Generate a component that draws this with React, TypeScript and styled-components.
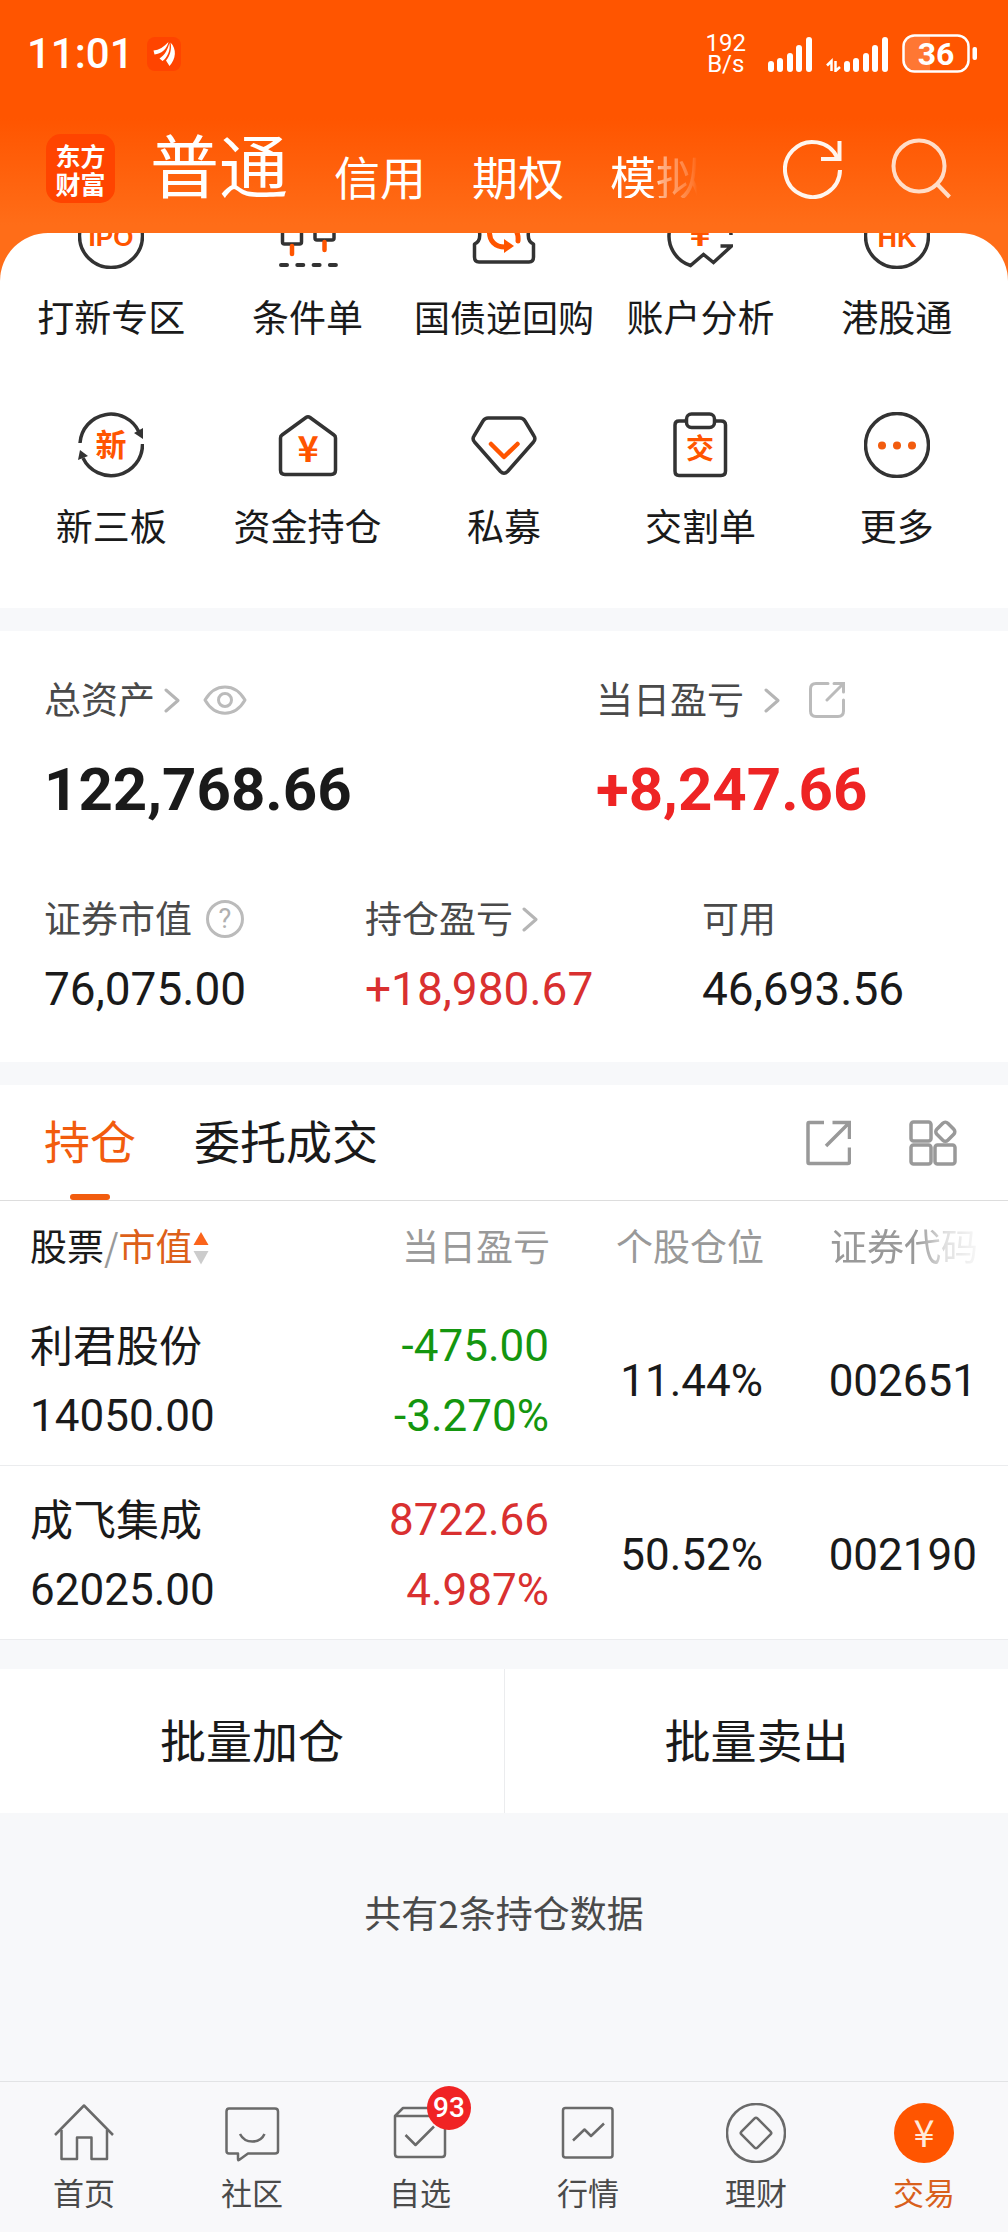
import React from 'react';
import styled, { createGlobalStyle } from 'styled-components';

const CJK = '"Noto Sans CJK SC", "Noto Sans", sans-serif';
const NUM = 'Roboto, "Noto Sans CJK SC", sans-serif';

const color = {
  brand: '#ff5500',
  accent: '#f25c0e',
  ink: '#1a1a1a',
  label: '#4a4a4a',
  muted: '#999999',
  faint: '#bbbbbb',
  up: '#d93030',
  upStrong: '#ee2424',
  down: '#14960f',
  band: '#f7f8fa',
  stroke: '#333333',
};

const GlobalStyle = createGlobalStyle`
  * { box-sizing: border-box; }
  body { margin: 0; background: ${color.band}; font-family: ${CJK}; color: ${color.ink}; }
  button { margin: 0; padding: 0; border: 0; background: none; font: inherit; color: inherit; cursor: pointer; }
  a { color: inherit; text-decoration: none; }
  svg { display: block; flex: none; }
`;

const Page = styled.div`
  display: flex;
  flex-direction: column;
  min-height: 100vh;
`;

/* ---------- header ---------- */

const Hero = styled.div`
  background: linear-gradient(180deg, #ff5500 0, #ff5500 118px, #ff6d18 225px, #ff6d18 100%);
`;

const StatusBar = styled.div`
  display: flex;
  align-items: center;
  height: 108px;
  padding: 0 31px 0 27px;
  color: #fff;
  font-family: ${NUM};
`;

const Clock = styled.time`
  font-size: 42px;
  font-weight: 500;
  line-height: 50px;
  margin-right: 13px;
`;

const NotifyIcon = styled.span`
  width: 34px;
  height: 34px;
  border-radius: 8px;
  background: #ff4400;
`;

const StatusRight = styled.div`
  display: flex;
  align-items: center;
  gap: 14px;
  margin-left: auto;
`;

const NetSpeed = styled.div`
  margin-right: 8px;
  font-size: 24px;
  line-height: 21px;
  text-align: center;
`;

const AccountBar = styled.header`
  display: flex;
  align-items: flex-end;
  padding: 21px 57px 30px 46px;
`;

const BrandLogo = styled.a`
  display: flex;
  align-items: center;
  justify-content: center;
  width: 69px;
  height: 69px;
  margin-right: 35px;
  border-radius: 15px;
  background: #ff4400;
  color: #fff;
  font-size: 25px;
  font-weight: 700;
  line-height: 28px;
`;

const AccountTabs = styled.nav`
  display: flex;
  align-items: flex-end;
  gap: 46px;
  padding-bottom: 5px;
`;

const AccountTab = styled.button<{ $active?: boolean; $faded?: boolean }>`
  color: #fff;
  white-space: nowrap;
  font-size: ${(p) => (p.$active ? 69 : 46)}px;
  line-height: 1;
  ${(p) =>
    p.$faded &&
    'mask-image: linear-gradient(90deg, #000 46%, rgba(0,0,0,.5) 56%, rgba(0,0,0,.15) 90%, transparent 95%);'}
`;

const HeaderActions = styled.div`
  display: flex;
  gap: 48px;
  margin-left: auto;
  padding-bottom: 4px;
`;

/* ---------- shortcuts ---------- */

const Sheet = styled.section`
  overflow: hidden;
  border-radius: 48px 48px 0 0;
  background: #fff;
`;

const ShortcutGrid = styled.div`
  display: grid;
  grid-template-columns: repeat(5, 1fr);
  row-gap: 71px;
  margin-top: -30px;
  padding: 0 13px 58px;
`;

const Shortcut = styled.button<{ $compact?: boolean }>`
  display: flex;
  flex-direction: column;
  align-items: center;
  gap: 22px;
  font-size: ${(p) => (p.$compact ? 36 : 37)}px;
  line-height: 50px;
  white-space: nowrap;
`;

const IconText = styled.text`
  fill: ${color.brand};
  font-weight: 700;
  text-anchor: middle;
`;

/* ---------- assets ---------- */

const Assets = styled.section`
  margin-top: 23px;
  padding: 42px 44px 48px;
  background: #fff;
`;

const Totals = styled.div`
  display: grid;
  grid-template-columns: 3fr 2fr;
  margin-bottom: 67px;
`;

const Details = styled.div`
  display: grid;
  grid-template-columns: 321fr 337fr 262fr;
`;

const Caption = styled.div`
  display: flex;
  align-items: center;
  color: ${color.label};
  font-size: 37px;
  line-height: 50px;
  white-space: nowrap;

  & svg { margin-top: 4px; }
`;

const CaptionButton = styled.button<{ $gap: number }>`
  display: flex;
  align-items: center;
  gap: ${(p) => p.$gap}px;
`;

const IconButton = styled.button<{ $gap?: number }>`
  margin-left: ${(p) => p.$gap ?? 0}px;
`;

const BigValue = styled.div<{ $up?: boolean }>`
  margin-top: 32px;
  font: 700 60px/70px ${NUM};
  color: ${(p) => (p.$up ? color.upStrong : color.ink)};
`;

const Value = styled.div<{ $up?: boolean }>`
  margin-top: 22px;
  font: 400 46px/50px ${NUM};
  color: ${(p) => (p.$up ? color.up : color.ink)};
`;

/* ---------- positions ---------- */

const Positions = styled.section`
  margin-top: 23px;
  background: #fff;
`;

const TabRow = styled.div`
  display: flex;
  align-items: center;
  gap: 58px;
  padding: 0 51px 0 44px;
  border-bottom: 1px solid #dddddd;
`;

const Tab = styled.button<{ $active?: boolean }>`
  display: flex;
  flex-direction: column;
  align-items: center;
  font-size: 46px;
  line-height: 109px;
  color: ${(p) => (p.$active ? color.accent : color.ink)};

  &::after {
    content: '';
    width: 40px;
    height: 6px;
    border-radius: 3px;
    background: ${(p) => (p.$active ? color.accent : 'transparent')};
  }
`;

const TabActions = styled.div`
  display: flex;
  align-items: center;
  gap: 58px;
  margin-left: auto;
`;

const Table = styled.table`
  width: 100%;
  table-layout: fixed;
  border-collapse: separate;
  border-spacing: 0;
  text-align: right;
`;

const HeadCell = styled.th<{ $width?: number; $first?: boolean }>`
  width: ${(p) => (p.$width ? `${p.$width}px` : 'auto')};
  height: 91px;
  padding: 0 ${(p) => (p.$first ? 0 : 30)}px 3px ${(p) => (p.$first ? 30 : 0)}px;
  color: ${color.muted};
  font-size: 37px;
  font-weight: 400;
  line-height: 50px;
  text-align: ${(p) => (p.$first ? 'left' : 'right')};
  white-space: nowrap;
`;

const SortButton = styled.button`
  display: flex;
  align-items: center;

  & > span { color: ${color.muted}; }
  & > b { font-weight: 400; color: ${color.ink}; }
  & > em { font-style: normal; color: #dd6018; }
  & > svg { margin-top: 6px; }
`;

const Faded = styled.span`
  mask-image: linear-gradient(90deg, #000 58%, rgba(0, 0, 0, 0.3) 78%, rgba(0, 0, 0, 0.08) 100%);
`;

const Cell = styled.td<{ $tone?: 'up' | 'down' }>`
  padding: 19px 31px 14px 0;
  border-bottom: 1px solid #ebecee;
  color: ${(p) => (p.$tone ? color[p.$tone] : color.ink)};
  font: 400 44px/70px ${NUM};
`;

const StockCell = styled(Cell)`
  padding-left: 30px;
  text-align: left;
`;

const StockName = styled.div`
  margin-bottom: 6px;
  font-family: ${CJK};
  font-size: 43px;
  line-height: 64px;
`;

const BatchActions = styled.div`
  display: grid;
  grid-template-columns: 1fr 1fr;
  margin-top: 29px;
  background: #fff;
`;

const BatchButton = styled.button`
  padding: 34px 0 40px;
  font-size: 46px;
  line-height: 70px;

  & + & { border-left: 1px solid #ebecee; }
`;

const Summary = styled.p`
  flex: 1;
  margin: 0;
  padding: 74px 0;
  color: ${color.label};
  font-size: 37px;
  line-height: 50px;
  text-align: center;
`;

/* ---------- bottom navigation ---------- */

const BottomNav = styled.nav`
  display: grid;
  grid-template-columns: repeat(6, 1fr);
  border-top: 1px solid #e2e3e5;
  background: #f8f8fa;
`;

const NavItem = styled.a<{ $active?: boolean }>`
  display: flex;
  flex-direction: column;
  align-items: center;
  gap: 9px;
  padding: 21px 0 20px;
  font-size: 31px;
  line-height: 40px;
  color: ${(p) => (p.$active ? '#d9601c' : color.label)};
`;

const NavIcon = styled.span`
  position: relative;
`;

const Badge = styled.span`
  position: absolute;
  top: -17px;
  left: 37px;
  width: 44px;
  height: 44px;
  border-radius: 50%;
  background: #f02324;
  color: #fff;
  font: 500 28px/44px ${NUM};
  text-align: center;
`;

/* ---------- icons ---------- */

const bars = [
  [0, 24],
  [9, 21],
  [19, 16],
  [28, 8],
  [38, 0],
];

const SignalBars = ({ x = 0 }: { x?: number }) => (
  <g fill="#fff">
    {bars.map(([bx, top]) => (
      <rect key={bx} x={x + bx} y={top} width="6" height={35 - top} rx="3" />
    ))}
  </g>
);

const Battery = () => (
  <svg width="75" height="40" viewBox="0 0 75 40">
    <path d="M12 2.5H28V37.500H12A10 10 0 0 1 2 27.500V12.500A10 10 0 0 1 12 2.500Z" fill="#fff" opacity=".2" />
    <rect x="1.500" y="1.500" width="65" height="36" rx="11" fill="none" stroke="#fff" strokeWidth="2.500" />
    <rect x="70.500" y="13" width="4.500" height="13" rx="2" fill="#fff" />
    <text x="34" y="31" textAnchor="middle" fill="#fff" fontFamily="Roboto" fontWeight="700" fontSize="32">36</text>
  </svg>
);

const Chevron = () => (
  <svg width="16" height="26" viewBox="0 0 16 26" fill="none" stroke="#b5b5b5" strokeWidth="3" strokeLinecap="round" strokeLinejoin="round">
    <path d="M2 3L14 13.500L2 24" />
  </svg>
);

const Line = ({ children }: { children: React.ReactNode }) => (
  <svg width="66" height="66" viewBox="0 0 66 66" fill="none" stroke={color.stroke} strokeWidth="3.500" strokeLinejoin="round">
    {children}
  </svg>
);

const latin = { fontFamily: 'Liberation Sans', stroke: 'none' };
const han = { fontFamily: 'Noto Sans CJK SC', stroke: 'none' };

const shortcuts: { label: string; compact?: boolean; icon: React.ReactNode }[] = [
  {
    label: '打新专区',
    icon: (
      <Line>
        <circle cx="33" cy="33" r="31.500" />
        <IconText {...latin} x="33" y="43" fontSize="26">IPO</IconText>
      </Line>
    ),
  },
  {
    label: '条件单',
    icon: (
      <Line>
        <rect x="7.500" y="16" width="19" height="25" rx="2" />
        <rect x="40" y="12" width="19" height="25" rx="2" />
        <path d="M17 43V51M49.500 39V47M17 14V8M49.500 10V4" stroke={color.brand} strokeWidth="4.500" strokeLinecap="round" />
        <path d="M6 62H61" strokeWidth="4" strokeLinecap="round" strokeDasharray="6 10.300" />
      </Line>
    ),
  },
  {
    label: '国债逆回购',
    compact: true,
    icon: (
      <Line>
        <path d="M3.500 41C10.500 38 10.500 26 3.500 22V12Q3.500 8 8 8H58Q62.500 8 62.500 12V22C55.500 26 55.500 38 62.500 41V54Q62.500 59 58 59H8Q3.500 59 3.500 54Z" />
        <path d="M18.500 28C18 38 24 44 34 44M47 38C48 28 42 21 32 21" stroke={color.brand} strokeWidth="5" strokeLinecap="round" />
        <path d="M33 36L43 43L33 50Z" fill={color.brand} stroke="none" />
      </Line>
    ),
  },
  {
    label: '账户分析',
    icon: (
      <Line>
        <path d="M64 32A31 31 0 1 0 23.500 62.500L36.500 51.500L46.500 59.500L64.500 43H53.500" strokeLinejoin="miter" />
        <IconText {...han} x="33" y="43" fontSize="35">¥</IconText>
      </Line>
    ),
  },
  {
    label: '港股通',
    icon: (
      <Line>
        <circle cx="33" cy="33" r="31.500" />
        <IconText {...latin} x="33" y="44" fontSize="27">HK</IconText>
      </Line>
    ),
  },
  {
    label: '新三板',
    icon: (
      <Line>
        <path d="M2 31A31 31 0 0 1 61 20M64.500 32A31.300 31.300 0 0 1 5 46" />
        <path d="M56 21L65 16V27ZM0 48L2 38L10 44Z" fill={color.stroke} stroke="none" />
        <IconText {...han} x="33" y="44" fontSize="31">新</IconText>
      </Line>
    ),
  },
  {
    label: '资金持仓',
    icon: (
      <Line>
        <path d="M31 5.500Q33 4 35 5.500L59 23Q60.500 24 60.500 26V58Q60.500 62.500 56 62.500H10Q5.500 62.500 5.500 58V26Q5.500 24 7 23Z" />
        <IconText {...han} x="33" y="50" fontSize="36">¥</IconText>
      </Line>
    ),
  },
  {
    label: '私募',
    icon: (
      <Line>
        <path d="M17 6H49Q52 6 54 9L63 24Q65 27 62.500 30L36.500 59.500Q33 63 29.500 59.500L3.500 30Q1 27 3 24L12 9Q14 6 17 6Z" />
        <path d="M20 32L33 45L46.500 32" stroke={color.brand} strokeWidth="4.500" strokeLinecap="round" />
      </Line>
    ),
  },
  {
    label: '交割单',
    icon: (
      <Line>
        <path d="M19 9H12Q8 9 8 13V59Q8 63.500 12 63.500H54Q58.500 63.500 58.500 59V13Q58.500 9 54 9H47" />
        <rect x="19.500" y="2" width="28" height="13.500" rx="5" />
        <IconText {...han} x="33" y="47" fontSize="28">交</IconText>
      </Line>
    ),
  },
  {
    label: '更多',
    icon: (
      <Line>
        <circle cx="33" cy="33" r="31.500" />
        <g fill={color.accent} stroke="none">
          <circle cx="18" cy="33.500" r="4" />
          <circle cx="33" cy="33.500" r="4" />
          <circle cx="48" cy="33.500" r="4" />
        </g>
      </Line>
    ),
  },
];

const navItems: { label: string; active?: boolean; badge?: number; icon: React.ReactNode }[] = [
  {
    label: '首页',
    icon: (
      <>
        <path d="M1 32L30 2.500L59 32" />
        <path d="M7.500 27V56H23V34.500H37.500V56H53V27" />
      </>
    ),
  },
  {
    label: '社区',
    icon: (
      <>
        <path d="M7 5.500H53Q56 5.500 56 8.500V48Q56 50.500 53 50.500H26L17 57Q16 57.500 16 56V50.500H7Q4.500 50.500 4.500 48V8.500Q4.500 5.500 7 5.500Z" />
        <path d="M18 31C23 41 38 41 42.500 31" />
      </>
    ),
  },
  {
    label: '自选',
    badge: 93,
    icon: (
      <>
        <path d="M5 13V51Q5 54 8 54H52Q55 54 55 51V13L47 5H13ZM5 13H55" />
        <path d="M15.500 32L25.500 42L44 23.500" />
      </>
    ),
  },
  {
    label: '行情',
    icon: (
      <>
        <rect x="5" y="5" width="49.500" height="49.500" rx="2.500" />
        <path d="M15 37.500L26.500 26.500L33 33L46 20.500" />
      </>
    ),
  },
  {
    label: '理财',
    icon: (
      <>
        <circle cx="30" cy="30" r="29" />
        <rect x="18.700" y="18.700" width="22.600" height="22.600" rx="2" transform="rotate(45 30 30)" />
      </>
    ),
  },
  {
    label: '交易',
    active: true,
    icon: (
      <>
        <circle cx="30" cy="30" r="30" fill={color.brand} stroke="none" />
        <text x="30" y="44" textAnchor="middle" fill="#ffeadb" stroke="none" fontFamily="Noto Sans CJK SC" fontSize="38">¥</text>
      </>
    ),
  },
];

const holdings: {
  name: string; value: string; profit: string; rate: string; tone: 'up' | 'down'; weight: string; code: string;
}[] = [
  { name: '利君股份', value: '14050.00', profit: '-475.00', rate: '-3.270%', tone: 'down', weight: '11.44%', code: '002651' },
  { name: '成飞集成', value: '62025.00', profit: '8722.66', rate: '4.987%', tone: 'up', weight: '50.52%', code: '002190' },
];

export default function App() {
  return (
    <Page>
      <GlobalStyle />
      <Hero>
        <StatusBar>
          <Clock>11:01</Clock>
          <NotifyIcon>
            <svg width="34" height="34" viewBox="0 0 34 34" fill="#fff">
              <path d="M6.500 13.500C12 13 17 10 21.500 5C20 12 14 17 7.500 17.500Z" />
              <path d="M12.500 21.500C18 18 21 12 22.300 6C24 13 20 21 15.500 24Z" />
              <path d="M19 23.500C23 19 25 12 23.500 5.500C30 12 29 22 22.500 29Z" />
            </svg>
          </NotifyIcon>
          <StatusRight>
            <NetSpeed>192<br />B/s</NetSpeed>
            <svg width="44" height="35" viewBox="0 0 44 35"><SignalBars /></svg>
            <svg width="62" height="35" viewBox="0 0 62 35">
              <path d="M5.500 34V24L1 28.500M9.500 24V34L14 30" fill="none" stroke="#fff" strokeWidth="2.500" />
              <SignalBars x={18} />
            </svg>
            <Battery />
          </StatusRight>
        </StatusBar>
        <AccountBar>
          <BrandLogo href="#home">东方<br />财富</BrandLogo>
          <AccountTabs>
            <AccountTab $active>普通</AccountTab>
            <AccountTab>信用</AccountTab>
            <AccountTab>期权</AccountTab>
            <AccountTab $faded>模拟</AccountTab>
          </AccountTabs>
          <HeaderActions>
            <IconButton aria-label="刷新">
              <svg width="60" height="62" viewBox="0 0 60 62" fill="none" stroke="#fff5ee" strokeWidth="4">
                <path d="M57 33A27.500 27.500 0 1 1 54.500 21" />
                <path d="M56.500 4V22H38" />
              </svg>
            </IconButton>
            <IconButton aria-label="搜索">
              <svg width="60" height="62" viewBox="0 0 60 62" fill="none" stroke="#ffddc8" strokeWidth="4">
                <circle cx="28" cy="29" r="25.500" />
                <path d="M46 47L58.500 60" />
              </svg>
            </IconButton>
          </HeaderActions>
        </AccountBar>
        <Sheet>
          <ShortcutGrid>
            {shortcuts.map((s) => (
              <Shortcut key={s.label} $compact={s.compact}>
                {s.icon}
                {s.label}
              </Shortcut>
            ))}
          </ShortcutGrid>
        </Sheet>
      </Hero>

      <Assets>
        <Totals>
          <div>
            <Caption>
              <CaptionButton $gap={9}>总资产<Chevron /></CaptionButton>
              <IconButton $gap={23} aria-label="隐藏金额">
                <svg width="44" height="30" viewBox="0 0 44 30" fill="none" stroke={color.faint} strokeWidth="3">
                  <path d="M2 15C12-2.500 32-2.500 42 15C32 32.500 12 32.500 2 15Z" strokeLinejoin="round" />
                  <circle cx="22" cy="15" r="6.500" />
                </svg>
              </IconButton>
            </Caption>
            <BigValue>122,768.66</BigValue>
          </div>
          <div>
            <Caption>
              <CaptionButton $gap={20}>当日盈亏<Chevron /></CaptionButton>
              <IconButton $gap={29} aria-label="分享当日盈亏">
                <svg width="36" height="36" viewBox="0 0 36 36" fill="none" stroke={color.faint} strokeWidth="3" strokeLinecap="round">
                  <path d="M19 1.500H7Q1.500 1.500 1.500 7V29Q1.500 34.500 7 34.500H29Q34.500 34.500 34.500 29V18" />
                  <path d="M25 1.500H34.500V10M34.500 1.500L18 18" />
                </svg>
              </IconButton>
            </Caption>
            <BigValue $up>+8,247.66</BigValue>
          </div>
        </Totals>
        <Details>
          <div>
            <Caption>
              证券市值
              <IconButton $gap={14} aria-label="证券市值说明">
                <svg width="38" height="38" viewBox="0 0 38 38" fill="none" stroke={color.faint} strokeWidth="3">
                  <circle cx="19" cy="19" r="17.500" />
                  <text x="19" y="28" textAnchor="middle" fill="#b0b0b0" stroke="none" fontFamily="Roboto" fontSize="27">?</text>
                </svg>
              </IconButton>
            </Caption>
            <Value>76,075.00</Value>
          </div>
          <div>
            <Caption>
              <CaptionButton $gap={9}>持仓盈亏<Chevron /></CaptionButton>
            </Caption>
            <Value $up>+18,980.67</Value>
          </div>
          <div>
            <Caption>可用</Caption>
            <Value>46,693.56</Value>
          </div>
        </Details>
      </Assets>

      <Positions>
        <TabRow>
          <Tab $active>持仓</Tab>
          <Tab>委托成交</Tab>
          <TabActions>
            <IconButton aria-label="分享持仓">
              <svg width="46" height="46" viewBox="0 0 46 46" fill="none" stroke={color.muted} strokeWidth="3.500">
                <path d="M19 2.500H4Q3 2.500 3 4V42Q3 43.500 4 43.500H43Q44.500 43.500 44.500 42V27.500" />
                <path d="M27.500 2.500H44.500V19M44 3L21 26" />
              </svg>
            </IconButton>
            <IconButton aria-label="更多功能">
              <svg width="48" height="46" viewBox="0 0 48 46" fill="none" stroke={color.muted} strokeWidth="3.500">
                <rect x="2" y="2" width="20" height="19" rx="2.500" />
                <rect x="2" y="25" width="20" height="19" rx="2.500" />
                <rect x="26" y="25" width="20" height="19" rx="2.500" />
                <rect x="28.500" y="4" width="15.500" height="15.500" rx="3.500" transform="rotate(45 36.300 11.800)" />
              </svg>
            </IconButton>
          </TabActions>
        </TabRow>
        <Table>
          <thead>
            <tr>
              <HeadCell $first>
                <SortButton>
                  <b>股票</b><span>/</span><em>市值</em>
                  <svg width="16" height="34" viewBox="0 0 16 34">
                    <path d="M8 1L15.500 14H.500Z" fill="#fb641b" />
                    <path d="M8 33.500L15.500 20H.500Z" fill="#cccccc" />
                  </svg>
                </SortButton>
              </HeadCell>
              <HeadCell $width={248}>当日盈亏</HeadCell>
              <HeadCell $width={214}>个股仓位</HeadCell>
              <HeadCell $width={214}><Faded>证券代码</Faded></HeadCell>
            </tr>
          </thead>
          <tbody>
            {holdings.map((h) => (
              <tr key={h.code}>
                <StockCell>
                  <StockName>{h.name}</StockName>
                  {h.value}
                </StockCell>
                <Cell $tone={h.tone}>{h.profit}<br />{h.rate}</Cell>
                <Cell>{h.weight}</Cell>
                <Cell>{h.code}</Cell>
              </tr>
            ))}
          </tbody>
        </Table>
      </Positions>

      <BatchActions>
        <BatchButton>批量加仓</BatchButton>
        <BatchButton>批量卖出</BatchButton>
      </BatchActions>

      <Summary>共有2条持仓数据</Summary>

      <BottomNav>
        {navItems.map((n) => (
          <NavItem key={n.label} href={`#${n.label}`} $active={n.active}>
            <NavIcon>
              <svg width="60" height="60" viewBox="0 0 60 60" fill="none" stroke="#6a6a6a" strokeWidth="2.500" strokeLinejoin="round">
                {n.icon}
              </svg>
              {n.badge && <Badge>{n.badge}</Badge>}
            </NavIcon>
            {n.label}
          </NavItem>
        ))}
      </BottomNav>
    </Page>
  );
}
